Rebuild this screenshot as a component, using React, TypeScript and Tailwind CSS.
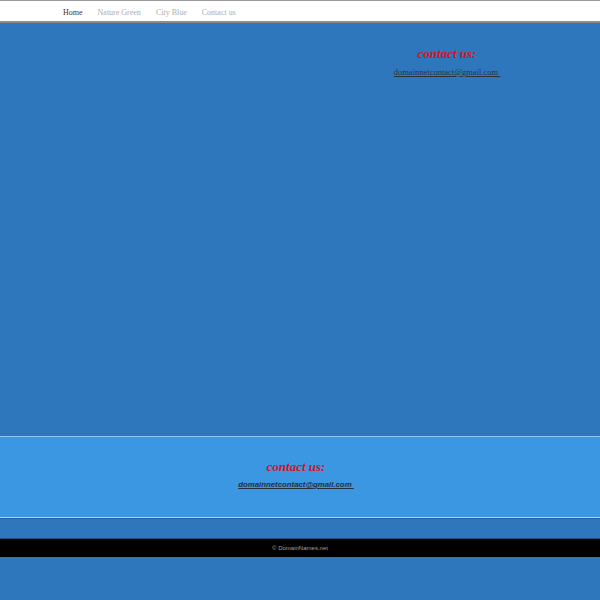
import React from 'react';

const navItems = ['Home', 'Nature Green', 'City Blue', 'Contact us'];

const App: React.FC = () => {
  return (
    <div className="min-h-[600px] bg-[#2e77bc]">
      {/* Top navigation */}
      <nav className="h-[23px] bg-white border-t border-[#9a9a9a] border-b-2 border-b-[#8c8c8c]">
        <ul className="flex items-center h-full pl-[63px] pt-[3px] gap-[15px] text-[8px] font-['Liberation_Serif',serif]">
          {navItems.map((item, i) => (
            <li key={item} className={i === 0 ? 'text-[#4a2e22]' : 'text-[#b3aca6]'}>
              {item}
            </li>
          ))}
        </ul>
      </nav>

      {/* Main area */}
      <main className="h-[413px] flex justify-end pr-[98px]">
        <div className="w-[110px] flex flex-col items-center pt-[22px]">
          <h2 className="text-[13px] leading-[18px] italic font-bold text-[#d2141c] font-['Liberation_Serif',serif]">
            contact us:
          </h2>
          <a href="#" className="mt-[3px] text-[8.5px] leading-[12px] text-[#2a3340] underline whitespace-nowrap font-['Liberation_Serif',serif]">
            domainnetcontact@gmail.com&nbsp;
          </a>
        </div>
      </main>

      {/* Light band */}
      <section className="h-[82px] bg-[#3b97e2] border-t border-[#8fc4ee] border-b border-b-[#a8d2f2] flex flex-col items-center pt-[21px] pr-[8px]">
        <h2 className="text-[13px] leading-[17px] italic font-bold text-[#d2141c] font-['Liberation_Serif',serif]">
          contact us:
        </h2>
        <a href="#" className="mt-[4px] text-[7.8px] leading-[12px] italic font-bold text-[#23303e] underline whitespace-nowrap font-['Liberation_Sans',sans-serif]">
          domainnetcontact@gmail.com&nbsp;
        </a>
      </section>

      <div className="h-[21px] border-t border-[#2565a3] border-b border-b-[#1d4f80]" />

      {/* Footer */}
      <footer className="h-[18px] bg-black flex items-center justify-center">
        <span className="text-[6px] text-[#a0a0a0] font-['Liberation_Sans',sans-serif]">© DomainNames.net</span>
      </footer>
    </div>
  );
};

export default App;
